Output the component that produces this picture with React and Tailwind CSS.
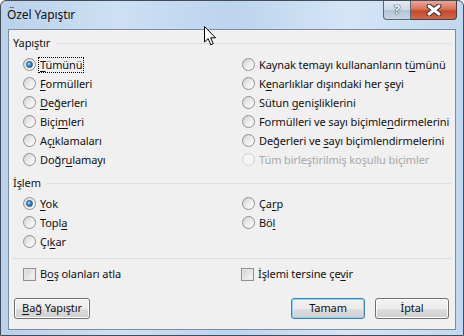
import React from 'react';

const FONT = "font-['Segoe_UI','Noto_Sans',sans-serif]";

function Radio({ checked, disabled }) {
  return (
    <span
      className={`relative flex h-[13px] w-[13px] shrink-0 items-center justify-center rounded-full border ${
        disabled
          ? 'border-[#cfcfcf] bg-[#f4f4f4]'
          : 'border-[#8e8f8f] bg-gradient-to-br from-[#d0d0d0] via-[#ececec] to-[#ffffff]'
      }`}
    >
      {checked && (
        <span className="h-[7px] w-[7px] rounded-full border border-[#1b4f7a] bg-[radial-gradient(circle_at_35%_35%,#a6dcff_0%,#3a8fd6_45%,#14589a_100%)]" />
      )}
    </span>
  );
}

function Check() {
  return (
    <span className="flex h-[13px] w-[13px] shrink-0 items-center justify-center border border-[#8e8f8f] bg-white">
      <span className="h-[11px] w-[11px] border border-[#e6e6e6] bg-gradient-to-br from-[#d4d4d4] to-[#f8f8f8]" />
    </span>
  );
}

// pre + underlined access key + post
function Label({ pre = '', k = '', post = '', disabled }) {
  return (
    <span className={`whitespace-nowrap ${disabled ? 'text-[#a7a7a7]' : 'text-[#111]'}`}>
      {pre}
      {k && <span className="underline decoration-1 underline-offset-[2px]">{k}</span>}
      {post}
    </span>
  );
}

function Option({ pre, k, post, checked, disabled, focus }) {
  return (
    <div className="flex h-[19px] items-center gap-[3px]">
      <Radio checked={checked} disabled={disabled} />
      <span className={`px-[1px] leading-[14px] ${focus ? 'outline outline-1 outline-dotted outline-black' : ''}`}>
        <Label pre={pre} k={k} post={post} disabled={disabled} />
      </span>
    </div>
  );
}

function GroupHeader({ title }) {
  return (
    <div className="flex h-[16px] items-center gap-[6px] pl-[4px] pr-[4px]">
      <span className="text-[#111]">{title}</span>
      <div className="h-px flex-1 bg-[#d5dfe5]" />
    </div>
  );
}

function Button({ children, primary, width }) {
  return (
    <button
      className={`flex h-[21px] items-center justify-center rounded-[3px] border text-[#111] ${width} ${
        primary
          ? 'border-[#3c7fb1] shadow-[inset_0_0_0_1px_#8fd3f5]'
          : 'border-[#707070] shadow-[inset_0_0_0_1px_#fcfcfc]'
      } bg-[linear-gradient(#f2f2f2_0%,#ebebeb_50%,#dddddd_51%,#cfcfcf_100%)]`}
    >
      {children}
    </button>
  );
}

const left = [
  { k: 'T', post: 'ümünü', checked: true, focus: true },
  { k: 'F', post: 'ormülleri' },
  { k: 'D', post: 'eğerleri' },
  { pre: 'Biçi', k: 'm', post: 'leri' },
  { pre: 'Aç', k: 'ı', post: 'klamaları' },
  { pre: 'Doğr', k: 'u', post: 'lamayı' },
];

const right = [
  { pre: 'Kaynak temayı kullananların t', k: 'ü', post: 'münü' },
  { pre: 'K', k: 'e', post: 'narlıklar dışındaki her şeyi' },
  { pre: 'Sütun ', k: 'g', post: 'enişliklerini' },
  { pre: 'Formülleri ve sayı biçimle', k: 'n', post: 'dirmelerini' },
  { pre: 'Değerleri ve ', k: 's', post: 'ayı biçimlendirmelerini' },
  { pre: 'Tüm birleştirilmiş koşullu biçimler', disabled: true },
];

export default function App() {
  return (
    <div
      className={`${FONT} relative flex h-[336px] w-[464px] flex-col overflow-hidden rounded-t-[6px] border border-[#434c58] bg-[linear-gradient(90deg,#b9d1ea_0%,#cde0f4_25%,#bcd4ee_50%,#d4e5f6_75%,#c2d8f0_100%)] text-[11px] tracking-[-0.1px]`}
    >
      {/* Title bar */}
      <div className="flex h-[28px] shrink-0 items-center pl-[6px] text-[12px] text-[#111]">
        Özel Yapıştır
      </div>

      {/* Caption buttons */}
      <div className="absolute right-[6px] top-0 flex h-[19px]">
        <div className="flex w-[28px] items-center justify-center rounded-bl-[4px] border border-t-0 border-[#5a6677] bg-[linear-gradient(#e3ebf4_0%,#cbd8e6_50%,#b3c4d7_51%,#c7d5e4_100%)] text-[13px] font-bold text-white [text-shadow:0_0_1px_#2a3340,0_0_1px_#2a3340,0_0_1px_#2a3340]">
          ?
        </div>
        <div className="flex w-[46px] items-center justify-center rounded-br-[4px] border border-l-0 border-t-0 border-[#5a3a33] bg-[linear-gradient(#e9a99a_0%,#d7735c_45%,#c44a2d_55%,#d0664a_100%)]">
          <svg width="16" height="12" viewBox="0 0 16 12">
            <path d="M3 2 L13 10 M13 2 L3 10" stroke="#3b2a28" strokeWidth="5" strokeLinecap="round" />
            <path d="M3 2 L13 10 M13 2 L3 10" stroke="#ffffff" strokeWidth="3" strokeLinecap="round" />
          </svg>
        </div>
      </div>

      {/* Client area */}
      <div className="mx-[7px] mb-[5px] flex flex-1 flex-col border border-[#7a8da3] bg-[#f0f0f0]">
        <div className="mt-[5px]">
          <GroupHeader title="Yapıştır" />
        </div>
        <div className="mt-[4px] grid grid-cols-[219px_1fr] pl-[14px]">
          <div className="flex flex-col">
            {left.map((o, i) => (
              <Option key={i} {...o} />
            ))}
          </div>
          <div className="flex flex-col">
            {right.map((o, i) => (
              <Option key={i} {...o} />
            ))}
          </div>
        </div>

        <div className="mt-[6px]">
          <GroupHeader title="İşlem" />
        </div>
        <div className="mt-[3px] grid grid-cols-[219px_1fr] pl-[14px]">
          <div className="flex flex-col">
            <Option k="Y" post="ok" checked />
            <Option pre="Topl" k="a" />
            <Option pre="Çı" k="k" post="ar" />
          </div>
          <div className="flex flex-col">
            <Option pre="Ça" k="r" post="p" />
            <Option pre="Bö" k="l" />
          </div>
        </div>

        <div className="mx-[4px] mt-[7px] h-px bg-[#d5dfe5]" />

        <div className="mt-[6px] grid grid-cols-[218px_1fr] pl-[14px]">
          <div className="flex h-[19px] items-center gap-[4px]">
            <Check />
            <Label pre="B" k="o" post="ş olanları atla" />
          </div>
          <div className="flex h-[19px] items-center gap-[4px]">
            <Check />
            <Label pre="İşlemi tersine çe" k="v" post="ir" />
          </div>
        </div>

        <div className="mt-[14px] flex items-center pl-[5px] pr-[6px]">
          <Button width="w-[76px]">
            <Label k="B" post="ağ Yapıştır" />
          </Button>
          <div className="flex-1" />
          <Button primary width="w-[74px]">Tamam</Button>
          <div className="w-[10px]" />
          <Button width="w-[74px]">İptal</Button>
        </div>
      </div>

      {/* Mouse pointer */}
      <svg className="absolute left-[203px] top-[25px]" width="13" height="20" viewBox="0 0 13 20">
        <path
          d="M0.5 0.5 L0.5 16 L4.2 12.6 L6.8 18.8 L9.2 17.8 L6.7 11.8 L11.5 11.8 Z"
          fill="#ffffff"
          stroke="#000000"
          strokeWidth="1"
          strokeLinejoin="round"
        />
      </svg>
    </div>
  );
}
